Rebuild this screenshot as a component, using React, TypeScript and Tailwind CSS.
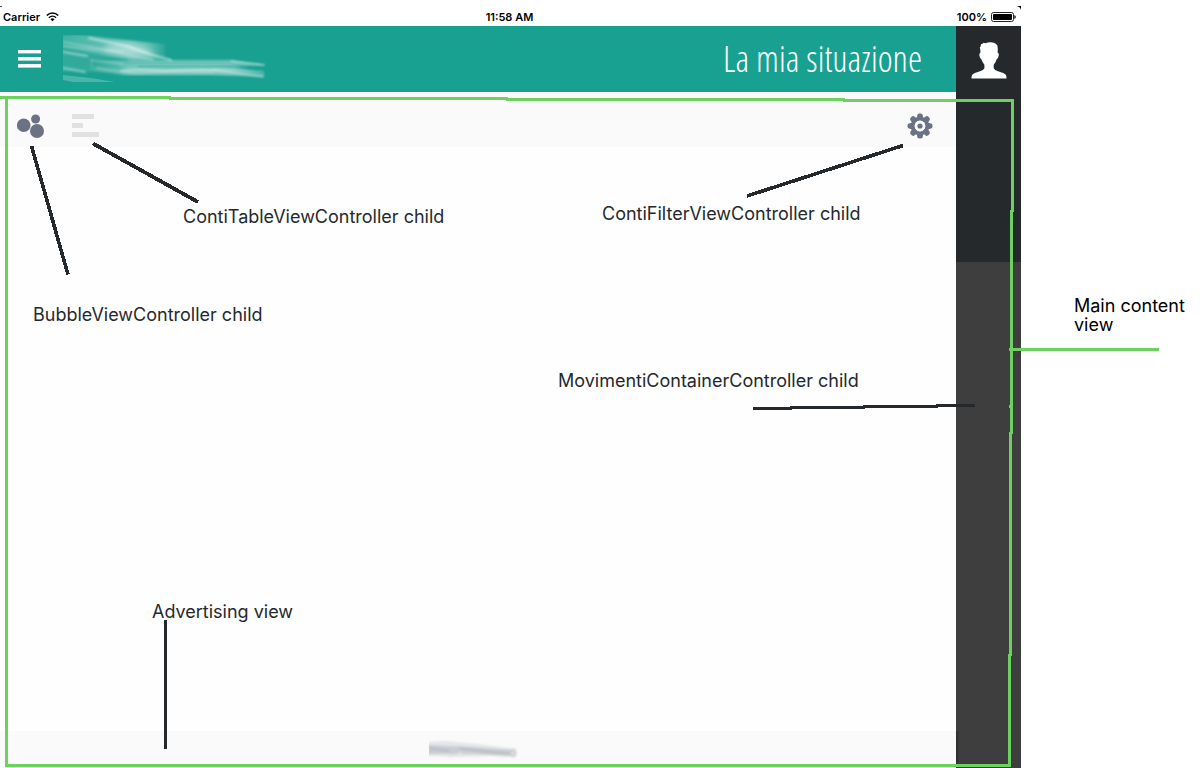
import type { ReactNode } from "react";

function WifiIcon() {
  return (
    <svg viewBox="0 0 13 10" className="h-[10px] w-[13px]" fill="none" stroke="black" aria-hidden="true">
      <path d="M0.8 3.5 A8 8 0 0 1 12.2 3.5" strokeWidth="1.5" />
      <path d="M2.9 5.7 A5 5 0 0 1 10.1 5.7" strokeWidth="1.4" />
      <path d="M6.5 9.3 L4.5 7.3 A2.8 2.8 0 0 1 8.5 7.3 Z" fill="black" stroke="none" />
    </svg>
  );
}

function BatteryIcon() {
  return (
    <svg viewBox="0 0 25 10" className="h-[10px] w-[25px]" aria-hidden="true">
      <rect x="0.5" y="0.5" width="22" height="9" rx="2" fill="none" stroke="#222" />
      <rect x="2" y="2" width="19" height="6" rx="0.8" fill="black" />
      <path d="M23.4 3 Q24.8 3.6 24.8 5 Q24.8 6.4 23.4 7 Z" fill="black" />
    </svg>
  );
}

function StatusBar() {
  return (
    <div className="relative grid h-[26px] grid-cols-3 items-end bg-white pb-[2px] pl-[3px] pr-[5px] text-[11px] font-semibold leading-[14px] text-black">
      <div className="flex items-center gap-[6px]">
        <span>Carrier</span>
        <WifiIcon />
      </div>
      <div className="text-center">11:58 AM</div>
      <div className="flex items-center justify-end gap-1">
        <span>100%</span>
        <BatteryIcon />
      </div>
      <svg viewBox="0 0 4 4" className="absolute right-0 top-[6px] h-1 w-1" aria-hidden="true">
        <path d="M0 0 H4 V4 Q3.5 1 0 0Z" fill="black" />
      </svg>
      <svg viewBox="0 0 2 1" className="absolute left-0 top-[6px] h-px w-[2px]" aria-hidden="true">
        <path d="M0 0 H2 V1 H0Z" fill="#555" />
      </svg>
    </div>
  );
}

function MenuIcon() {
  return (
    <svg viewBox="0 0 23 18" className="h-[18px] w-[23px]" fill="white" aria-hidden="true">
      <rect width="23" height="3.4" />
      <rect y="7" width="23" height="3.6" />
      <rect y="14" width="23" height="3.6" />
    </svg>
  );
}

function BrandSmear() {
  return (
    <svg viewBox="0 0 204 48" className="h-12 w-[204px]" aria-hidden="true">
      <defs>
        <linearGradient id="brandFade" gradientUnits="userSpaceOnUse" x1="0" x2="104" y1="0" y2="0">
          <stop offset="0" stopColor="#fff" stopOpacity="0.18" />
          <stop offset="0.65" stopColor="#fff" stopOpacity="0.4" />
          <stop offset="0.85" stopColor="#fff" stopOpacity="0.28" />
          <stop offset="1" stopColor="#fff" stopOpacity="0.04" />
        </linearGradient>
        <linearGradient id="brandTail" gradientUnits="userSpaceOnUse" x1="24" x2="202" y1="0" y2="0">
          <stop offset="0" stopColor="#fff" stopOpacity="0.05" />
          <stop offset="0.25" stopColor="#fff" stopOpacity="0.34" />
          <stop offset="0.8" stopColor="#fff" stopOpacity="0.36" />
          <stop offset="1" stopColor="#fff" stopOpacity="0.22" />
        </linearGradient>
        <filter id="brandSoft" x="-5%" y="-20%" width="110%" height="140%">
          <feGaussianBlur stdDeviation="0.8" />
        </filter>
        <filter id="brandSofter" x="-20%" y="-50%" width="140%" height="200%">
          <feGaussianBlur stdDeviation="3" />
        </filter>
        <clipPath id="brandClip">
          <rect width="204" height="48" />
        </clipPath>
      </defs>
      <g clipPath="url(#brandClip)">
        <path d="M-2 0 H20 L62 5 L102 9 V23 L108 25 H70 L0 13Z" fill="url(#brandFade)" filter="url(#brandSoft)" />
        <path d="M-2 13 L70 24 H30 V31 L60 38 L-2 36Z" fill="#fff" fillOpacity="0.11" filter="url(#brandSoft)" />
        <path d="M28 25 H165 L202 30 L172 32 L202 38 L200 42 L150 40 H60 L26 35Z" fill="url(#brandTail)" filter="url(#brandSoft)" />
        <path d="M0 40 L28 43 L52 47 H10 L0 45Z" fill="#fff" fillOpacity="0.22" />
        <path d="M42 11 Q60 6 84 13 L92 21 L72 20 L42 16Z" fill="#fff" fillOpacity="0.45" filter="url(#brandSofter)" />
        <path d="M60 32 H150 L190 38 H60Z" fill="#fff" fillOpacity="0.25" filter="url(#brandSofter)" />
        <g fill="none" stroke="#fff" strokeLinecap="round" filter="url(#brandSoft)">
          <path d="M0 7 L40 14 L66 20 L90 25" strokeOpacity="0.25" strokeWidth="2" />
          <path d="M26 3 L64 11 L86 19 L108 25" strokeOpacity="0.5" strokeWidth="2" />
          <path d="M0 11 L34 15 L60 17" strokeOpacity="0.25" strokeWidth="2" />
          <path d="M0 17 L24 21" strokeOpacity="0.45" strokeWidth="1.8" />
          <path d="M28 25 L60 29" strokeOpacity="0.25" strokeWidth="2" />
          <path d="M0 33 L22 37" strokeOpacity="0.35" strokeWidth="2.4" />
          <path d="M34 33 L70 38 L110 36 L150 37" strokeOpacity="0.22" strokeWidth="2" />
          <path d="M58 36 L78 34.5 L104 36 L142 34.5 L166 37 L200 41.5" strokeOpacity="0.4" strokeWidth="2" />
          <path d="M150 34 L200 36.5" strokeOpacity="0.3" strokeWidth="1.5" />
          <path d="M168 26 L201 30" strokeOpacity="0.6" strokeWidth="1.4" />
        </g>
        <path d="M75 31.5 H172 L198 35" fill="none" stroke="#18a090" strokeOpacity="0.45" strokeWidth="1.5" filter="url(#brandSoft)" />
      </g>
    </svg>
  );
}

function FooterSmear() {
  return (
    <svg viewBox="0 0 89 20" className="h-5 w-[89px]" aria-hidden="true">
      <defs>
        <filter id="footSoft" x="-5%" y="-20%" width="110%" height="140%">
          <feGaussianBlur stdDeviation="1" />
        </filter>
        <clipPath id="footClip">
          <rect width="89" height="20" />
        </clipPath>
      </defs>
      <g clipPath="url(#footClip)">
        <g filter="url(#footSoft)">
          <path d="M-4 2 L18 1 L48 4 L87 9 V17 L60 16 L30 17 L-4 16Z" fill="#e4e6e9" />
          <path d="M-4 5 L40 7 L84 10 V16 L44 14 L-4 14Z" fill="#c9ccd2" />
          <path d="M0 8 L20 11 M30 8 L62 12 M52 11 L80 14" stroke="#b9bdc5" strokeWidth="1.8" fill="none" />
          <path d="M20 17 L34 12" stroke="#dfe1e4" strokeWidth="1.5" fill="none" />
          <ellipse cx="84" cy="13" rx="3" ry="3.5" fill="#d8dadf" stroke="#bfc2c9" />
        </g>
      </g>
    </svg>
  );
}

function UserIcon() {
  return (
    <svg viewBox="0 0 36 37" className="h-[37px] w-9" fill="white" aria-hidden="true">
      <path d="M10 2.2 L12 1.6 L12.4 0.8 L14.5 1.2 Q18 -0.2 22 0.5 L24.5 1.4 L26.4 3.6 L26.8 7 L26.6 10.5 Q28.3 11 27.6 14 Q27 17 25.5 17.4 Q24.8 20.6 22.7 22.8 V26.2 Q23.5 28 27 29.2 Q33.5 31 34.8 32.8 Q35.6 34.2 35.5 36.4 H0.5 Q0.4 34.2 1.2 32.8 Q2.5 31 9 29.2 Q12.6 28 13.4 26.2 V22.8 Q11.4 20.6 10.5 17.4 Q9 17 8.5 14 Q8 11 9.5 10.5 L9.2 7 L8.8 5.6 L9.6 4.6Z" />
    </svg>
  );
}

function BubblesIcon() {
  return (
    <svg viewBox="0 0 28 24" className="h-6 w-7" fill="#6b7283" aria-hidden="true">
      <circle cx="6.7" cy="11.2" r="6.8" />
      <circle cx="18.6" cy="5" r="4.5" />
      <circle cx="20" cy="17" r="7" />
    </svg>
  );
}

function ListBarsIcon() {
  return (
    <svg viewBox="0 0 27 23" className="h-[23px] w-[27px]" fill="#e1e1e2" aria-hidden="true">
      <rect width="22" height="5" />
      <rect y="9" width="11" height="5" />
      <rect y="18" width="27" height="5" />
    </svg>
  );
}

function GearIcon() {
  const angles = [0, 45, 90, 135, 180, 225, 270, 315];
  return (
    <svg viewBox="-13 -13 26 26" className="size-[26px]" fill="#6b7283" aria-hidden="true">
      {angles.map((a) => (
        <path key={a} transform={`rotate(${a})`} d="M-3.4 -7 L-2.6 -11.2 Q-2.2 -12.5 0 -12.5 Q2.2 -12.5 2.6 -11.2 L3.4 -7Z" />
      ))}
      <circle r="7.2" fill="none" stroke="#6b7283" strokeWidth="4" />
      <circle r="5.4" fill="#fafafa" />
      <circle r="2.6" />
    </svg>
  );
}

function Callout({ className, children }: { className: string; children: ReactNode }) {
  return <p className={`absolute whitespace-nowrap text-[18px] leading-5 text-[#25292c] ${className}`}>{children}</p>;
}

function CalloutLines() {
  return (
    <svg className="pointer-events-none absolute left-0 top-0 h-[768px] w-[1201px]" viewBox="0 0 1201 768" shapeRendering="crispEdges" fill="none" strokeWidth="3" aria-hidden="true">
      <g stroke="#25292c">
        <path d="M31.5 146 L68 274.5" strokeWidth="3.6" />
        <path d="M93 143.5 L198 202" strokeWidth="3.8" />
        <path d="M747 196 L903 145.5" strokeWidth="3.6" />
        <path d="M753 408.5 H792 M790 407.5 H865 M863 406.5 H938 M936 405.5 H975" />
        <path d="M165.5 620 V749" />
      </g>
      <g stroke="#6dd15f">
        <path d="M0 97.5 H171 M169 98.5 H508 M506 99.5 H845 M843 100.5 H1014" />
        <path d="M1012.5 99 V212 M1011.5 210 V434 M1010.5 432 V656 M1009.5 654 V767" />
        <path d="M6.5 97 V767 M5 765.5 H1011" />
        <path d="M1009 349.5 H1159 M1009 406.5 H1012" />
      </g>
    </svg>
  );
}

export default function App() {
  return (
    <div className="relative flex min-h-screen bg-white font-['Inter','Liberation_Sans',sans-serif]">
      <div className="flex min-w-0 flex-1 flex-col">
        <StatusBar />
        <div className="flex flex-1">
          <div className="flex min-w-0 flex-1 flex-col">
            <header className="flex h-[66px] items-center justify-between bg-[#18a090] pl-[18px] pr-[34px]">
              <div className="flex items-center gap-[22px]">
                <button type="button" aria-label="Menu">
                  <MenuIcon />
                </button>
                <BrandSmear />
              </div>
              <h1 className="font-['Open_Sans_Condensed_Light','Open_Sans_Condensed','Open_Sans',sans-serif] text-[36px] font-light leading-[66px] text-white">
                La mia situazione
              </h1>
            </header>
            <div className="flex h-[55px] items-center justify-between bg-[#fafafa] pl-[17px] pr-[23px] pt-3">
              <div className="flex items-center gap-[27px]">
                <button type="button" aria-label="Bubbles">
                  <BubblesIcon />
                </button>
                <button type="button" aria-label="List">
                  <ListBarsIcon />
                </button>
              </div>
              <button type="button" aria-label="Filters">
                <GearIcon />
              </button>
            </div>
            <main className="flex-1 bg-[#fefefe]" />
            <footer className="flex h-[37px] items-center justify-center bg-[#fafafa] pr-[10px]">
              <FooterSmear />
            </footer>
          </div>
          <aside className="flex w-[65px] flex-col bg-[#3e3e3e]">
            <div className="flex h-[236px] justify-center bg-[#25292c] pt-4">
              <button type="button" aria-label="Profile" className="self-start">
                <UserIcon />
              </button>
            </div>
            <div className="flex-1" />
            <div className="h-[37px] w-1 bg-linear-to-r from-[#2c2c2c] to-[#3e3e3e]" />
          </aside>
        </div>
      </div>
      <div className="w-[180px] pl-[53px] pt-[296px]">
        <p className="text-[18px] leading-[19px] text-black">Main content view</p>
      </div>

      <CalloutLines />
      <Callout className="left-[183px] top-[207px]">ContiTableViewController child</Callout>
      <Callout className="left-[602px] top-[204px]">ContiFilterViewController child</Callout>
      <Callout className="left-[33px] top-[305px]">BubbleViewController child</Callout>
      <Callout className="left-[558px] top-[371px]">MovimentiContainerController child</Callout>
      <Callout className="left-[152px] top-[602px]">Advertising view</Callout>
    </div>
  );
}
